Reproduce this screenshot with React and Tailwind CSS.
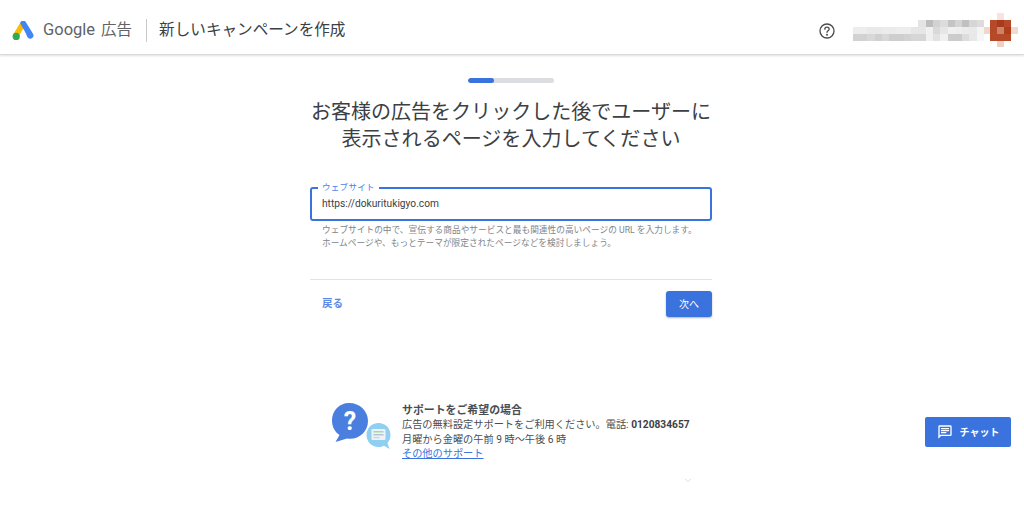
import React from "react";

const mosaicTop = ["#e4e4e4","#bdbdbd","#d2d2d2","#dcdcdc","#c4c4c4","#d4d4d4","#c0c0c0","#d6d6d6","#dcdcdc"];
const mosaicMid = ["#ededed","#ededed","#e9e9e9","#e9e9e9","#ebebeb","#ebebeb","#ededed","#ededed","#e6e6e6","#e6e6e6","#f0f0f0","#d9d9d9","#e6e6e6","#f0f0f0","#eeeeee","#ebebeb","#e9e9e9","#f4f4f4"];
const mosaicBot = ["#d2d2d2","#d2d2d2","#d8d8d8","#d0d0d0","#d8d8d8","#cecece","#cecece","#d2d2d2","#d6d6d6","#d6d6d6","#f0f0f0","#e2e2e2","#f0f0f0","#cccccc","#cccccc","#dcdcdc","#e8e8e8","#f6f6f6"];

function Mosaic() {
  return (
    <div className="flex items-start">
      <div className="flex flex-col items-end">
        <div className="flex h-[7px]">
          {mosaicTop.map((c, i) => <div key={i} className="w-[7.3px] h-full" style={{ backgroundColor: c }} />)}
        </div>
        <div className="flex h-[7px]">
          {mosaicMid.map((c, i) => <div key={i} className="w-[7.3px] h-full" style={{ backgroundColor: c }} />)}
        </div>
        <div className="flex h-[7px]">
          {mosaicBot.map((c, i) => <div key={i} className="w-[7.3px] h-full" style={{ backgroundColor: c }} />)}
        </div>
      </div>
      <svg width="34" height="34" viewBox="0 0 34 34" className="-mt-[7px] -mb-[6px] -mr-[6px] shrink-0" aria-hidden="true">
        <rect x="13" y="0" width="7" height="7" fill="#f6e4de" />
        <rect x="13" y="28" width="7" height="6" fill="#f0cfc4" />
        <rect x="0" y="14" width="6" height="7" fill="#f0d6cc" />
        <rect x="27" y="14" width="7" height="7" fill="#f3d9cf" />
        <rect x="6" y="7" width="21" height="21" fill="#b64a28" />
        <rect x="13" y="7" width="7" height="7" fill="#a83b1d" />
        <rect x="13" y="14" width="7" height="7" fill="#cb8468" />
        <rect x="20" y="14" width="7" height="7" fill="#ae3f1b" />
      </svg>
    </div>
  );
}

function GoogleAdsLogo() {
  return (
    <svg width="22" height="20" viewBox="0 0 22 20" aria-hidden="true">
      <path d="M8 1.9 L1.4 13.2 L6.3 16 L12.9 4.7 Z" fill="#fbbc04" />
      <path d="M13.9 1.2 a3.1 3.1 0 0 0 -5.4 0 L8 2 L13 10.8 L15.4 15.9 A3.2 3.2 0 0 0 21 12.8 Z" fill="#4285f4" />
      <circle cx="4.2" cy="15.4" r="3.6" fill="#34a853" />
    </svg>
  );
}

function HelpBubbleIcon() {
  return (
    <svg width="62" height="52" viewBox="0 0 62 52" aria-hidden="true">
      <path d="M18 1 C8 1 1 9 1 18.5 C1 25 4 30 8.5 33 L4.5 40 L16 36.5 C17 36.7 18 36.8 19 36.8 C29 36.8 37 29 37 19 C37 9 29 1 18 1 Z" fill="#4a7fe0" />
      <text x="19" y="27.5" textAnchor="middle" fontSize="25" fontWeight="700" fill="#ffffff" fontFamily="Roboto, sans-serif">?</text>
      <path d="M47.5 21 C40.5 21 35.5 26.5 35.5 33 C35.5 39.5 40.5 45 47.5 45 C49.5 45 51.5 44.5 53 43.7 L58.5 47 L56.5 41 C58.3 39 59.5 36.2 59.5 33 C59.5 26.5 54.5 21 47.5 21 Z" fill="#8fd0f2" />
      <rect x="40.5" y="27" width="14" height="11" rx="1" fill="#eef2f4" />
      <rect x="42.5" y="29" width="10" height="1.5" fill="#a9d7a9" />
      <rect x="42.5" y="32" width="10" height="1.5" fill="#b5c3d6" />
      <rect x="42.5" y="35" width="6" height="1.2" fill="#c9d2da" />
    </svg>
  );
}

export default function App() {
  return (
    <div className="w-[1024px] h-[512px] overflow-hidden bg-white relative text-[#3c4043] font-['Roboto','Noto_Sans_CJK_JP',sans-serif]">
      <header className="h-[55px] flex items-center justify-between pt-[7px] pl-[12px] pr-[12px] bg-white border-b border-[#d9d9d9] shadow-[0_1px_2px_rgba(0,0,0,0.12)]">
        <div className="flex items-center">
          <GoogleAdsLogo />
          <span className="ml-[9px] text-[16.5px] text-[#5f6368] leading-none">Google</span>
          <span className="ml-[6px] text-[15.5px] text-[#5f6368] leading-none">広告</span>
          <div className="ml-[14px] mr-[12px] w-px h-[23px] bg-[#c8c9cb]" />
          <span className="text-[15.6px] text-[#3c4043] leading-none">新しいキャンペーンを作成</span>
        </div>
        <div className="flex items-center">
          <svg width="16" height="16" viewBox="0 0 24 24" className="mr-[18px]" fill="none" stroke="#4a4d50" strokeWidth="2" strokeLinecap="round" aria-hidden="true">
            <circle cx="12" cy="12" r="10.5" />
            <path d="M8.8 9.3a3.2 3.2 0 0 1 6.4 0c0 2.2-3.2 2.6-3.2 4.7" />
            <circle cx="12" cy="17.6" r="0.6" fill="#4a4d50" />
          </svg>
          <Mosaic />
        </div>
      </header>

      <main className="flex flex-col items-center pr-[2px]">
        <div className="mt-[23px] w-[86px] h-[5px] rounded-full bg-[#dcdde0] overflow-hidden">
          <div className="w-[26px] h-full rounded-full bg-[#3b73de]" />
        </div>

        <h1 className="mt-[16px] text-[20.05px] leading-[27px] font-normal text-center text-[#3c4043]">
          お客様の広告をクリックした後でユーザーに
          <br />
          表示されるページを入力してください
        </h1>

        <div className="mt-[34px] w-[402px]">
          <div className="relative h-[34px] rounded-[3px] border-2 border-[#3b73de] flex items-center pl-[10px] text-[10.2px] text-[#3c4043]">
            https://dokuritukigyo.com
            <span className="absolute -top-[7px] left-[6px] px-[4px] bg-white text-[8.5px] leading-[11px] tracking-[0.3px] text-[#4a7fe4]">ウェブサイト</span>
          </div>
          <p className="mt-[3px] pl-[12px] text-[8.7px] leading-[13px] text-[#80868b] whitespace-nowrap">
            ウェブサイトの中で、宣伝する商品やサービスと最も関連性の高いページの URL を入力します。
            <br />
            ホームページや、もっとテーマが限定されたページなどを検討しましょう。
          </p>
          <div className="mt-[29px] h-px bg-[#e3e3e3]" />
          <div className="mt-[11px] flex items-center justify-between">
            <span className="pl-[12px] text-[10.5px] font-bold text-[#5a8ae6]">戻る</span>
            <div className="w-[46px] h-[26px] rounded-[3px] bg-[#3b73de] text-white text-[10px] flex items-center justify-center shadow-[0_1px_2px_rgba(0,0,0,0.3)]">次へ</div>
          </div>
        </div>

        <div className="mt-[87px] w-[358px] flex items-start">
          <div className="-mt-[2px] -ml-[1px] w-[71px] shrink-0"><HelpBubbleIcon /></div>
          <div className="text-[10.2px] leading-[14.4px] text-[#4a4d50] whitespace-nowrap">
            <div className="font-bold text-[10.9px]">サポートをご希望の場合</div>
            <div>広告の無料設定サポートをご利用ください。電話: <span className="font-bold text-[#3c4043]">0120834657</span></div>
            <div>月曜から金曜の午前 9 時〜午後 6 時</div>
            <div className="text-[#3b73de] underline">その他のサポート</div>
          </div>
        </div>
      </main>

      <div className="absolute left-[925px] top-[417px] w-[86px] h-[30px] rounded-[2px] bg-[#3b73de] text-white flex items-center justify-center gap-[7px] text-[10px] font-bold">
        <svg width="16" height="16" viewBox="0 0 24 24" fill="#fff" aria-hidden="true">
          <path d="M20 2H4a2 2 0 0 0-2 2v18l4-4h14a2 2 0 0 0 2-2V4a2 2 0 0 0-2-2Zm0 14H5.2L4 17.2V4h16v12ZM6 12h8v2H6v-2Zm0-3h12v2H6V9Zm0-3h12v2H6V6Z" />
        </svg>
        チャット
      </div>

      <svg width="8" height="5" viewBox="0 0 8 5" className="absolute left-[684px] top-[478px]" fill="none" stroke="#dfe1e3" strokeWidth="1" aria-hidden="true">
        <path d="M1 1l3 2.5L7 1" />
      </svg>
    </div>
  );
}
